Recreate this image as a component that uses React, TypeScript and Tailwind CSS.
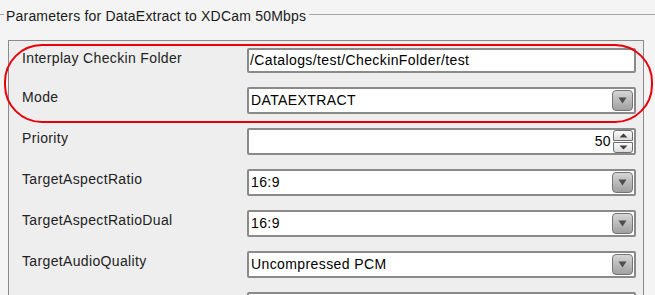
import React from 'react'

const font = { fontFamily: '"Liberation Sans", Arial, sans-serif' }

const DropButton: React.FC = () => (
  <div className="w-[21px] h-[21px] rounded-[4px] border border-[#747474] bg-gradient-to-b from-[#d6d6d6] to-[#a0a0a0] flex items-center justify-center shrink-0">
    <svg width="9" height="7" viewBox="0 0 9 7">
      <path d="M0.5 0.5 L8.5 0.5 L4.5 6.5 Z" fill="#4d4d4d" />
    </svg>
  </div>
)

const Spinner: React.FC = () => (
  <div className="w-[20px] h-[23px] flex flex-col gap-[1px] shrink-0">
    <div className="flex-1 rounded-t-[3px] border border-[#6e6e6e] bg-gradient-to-b from-[#fafafa] to-[#dcdcdc] flex items-center justify-center">
      <svg width="9" height="5" viewBox="0 0 9 5">
        <path d="M0.5 4.5 L8.5 4.5 L4.5 0.5 Z" fill="#3f3f3f" />
      </svg>
    </div>
    <div className="flex-1 rounded-b-[3px] border border-[#6e6e6e] bg-gradient-to-b from-[#fafafa] to-[#dcdcdc] flex items-center justify-center">
      <svg width="9" height="5" viewBox="0 0 9 5">
        <path d="M0.5 0.5 L8.5 0.5 L4.5 4.5 Z" fill="#3f3f3f" />
      </svg>
    </div>
  </div>
)

const TextBox: React.FC<{ value: string }> = ({ value }) => (
  <div className="h-[25px] bg-white border-2 border-[#8a8a8a] rounded-[2px] flex items-center pl-[1px] text-[14px] tracking-[0.4px] text-black">
    {value}
  </div>
)

const Combo: React.FC<{ value: string }> = ({ value }) => (
  <div className="h-[27px] bg-white border-2 border-[#8a8a8a] rounded-[2px] flex items-center justify-between pl-[2px] pr-[1px] text-[14px] tracking-[0.4px] text-black">
    <span>{value}</span>
    <DropButton />
  </div>
)

const NumberBox: React.FC<{ value: string }> = ({ value }) => (
  <div className="h-[27px] bg-white border-2 border-[#8a8a8a] rounded-[2px] flex items-center justify-end gap-[2px] pr-[1px] text-[14px] tracking-[0.4px] text-black">
    <span>{value}</span>
    <Spinner />
  </div>
)

const rows: { label: string; field: React.ReactNode }[] = [
  { label: 'Interplay Checkin Folder', field: <TextBox value="/Catalogs/test/CheckinFolder/test" /> },
  { label: 'Mode', field: <Combo value="DATAEXTRACT" /> },
  { label: 'Priority', field: <NumberBox value="50" /> },
  { label: 'TargetAspectRatio', field: <Combo value="16:9" /> },
  { label: 'TargetAspectRatioDual', field: <Combo value="16:9" /> },
  { label: 'TargetAudioQuality', field: <Combo value="Uncompressed PCM" /> },
  { label: '', field: <Combo value="" /> }
]

const App: React.FC = () => {
  return (
    <div className="relative w-[655px] h-[295px] overflow-hidden bg-[#f4f4f4]" style={font}>
      {/* fieldset legend */}
      <div className="flex items-start h-[30px]">
        <div className="w-[4px] h-px mt-[14px] bg-[#a8a8a8]" />
        <span className="pl-[2px] pr-[3px] mt-[6px] text-[14px] tracking-[0.2px] text-[#1a1a1a] leading-[20px]">Parameters for DataExtract to XDCam 50Mbps</span>
        <div className="flex-1 h-px mt-[14px] bg-[#a8a8a8]" />
      </div>

      {/* panel */}
      <div className="ml-[8px] mr-[11px] mt-[10px] h-[400px] border border-[#8a8a8a] bg-[#eeeeee] pl-[13px] pr-[7px] pt-[7px]">
        <div className="flex flex-col gap-[14px]">
          {rows.map((r, i) => (
            <div key={i} className="grid grid-cols-[225px_1fr] items-start">
              <div className="text-[14px] tracking-[0.35px] leading-[20px] text-[#222]">{r.label}</div>
              {r.field}
            </div>
          ))}
        </div>
      </div>

      {/* red annotation */}
      <div className="absolute left-[4px] top-[44px] w-[649px] h-[79px] border-2 border-[#e8000b] rounded-[38px] pointer-events-none" />
    </div>
  )
}

export default App
